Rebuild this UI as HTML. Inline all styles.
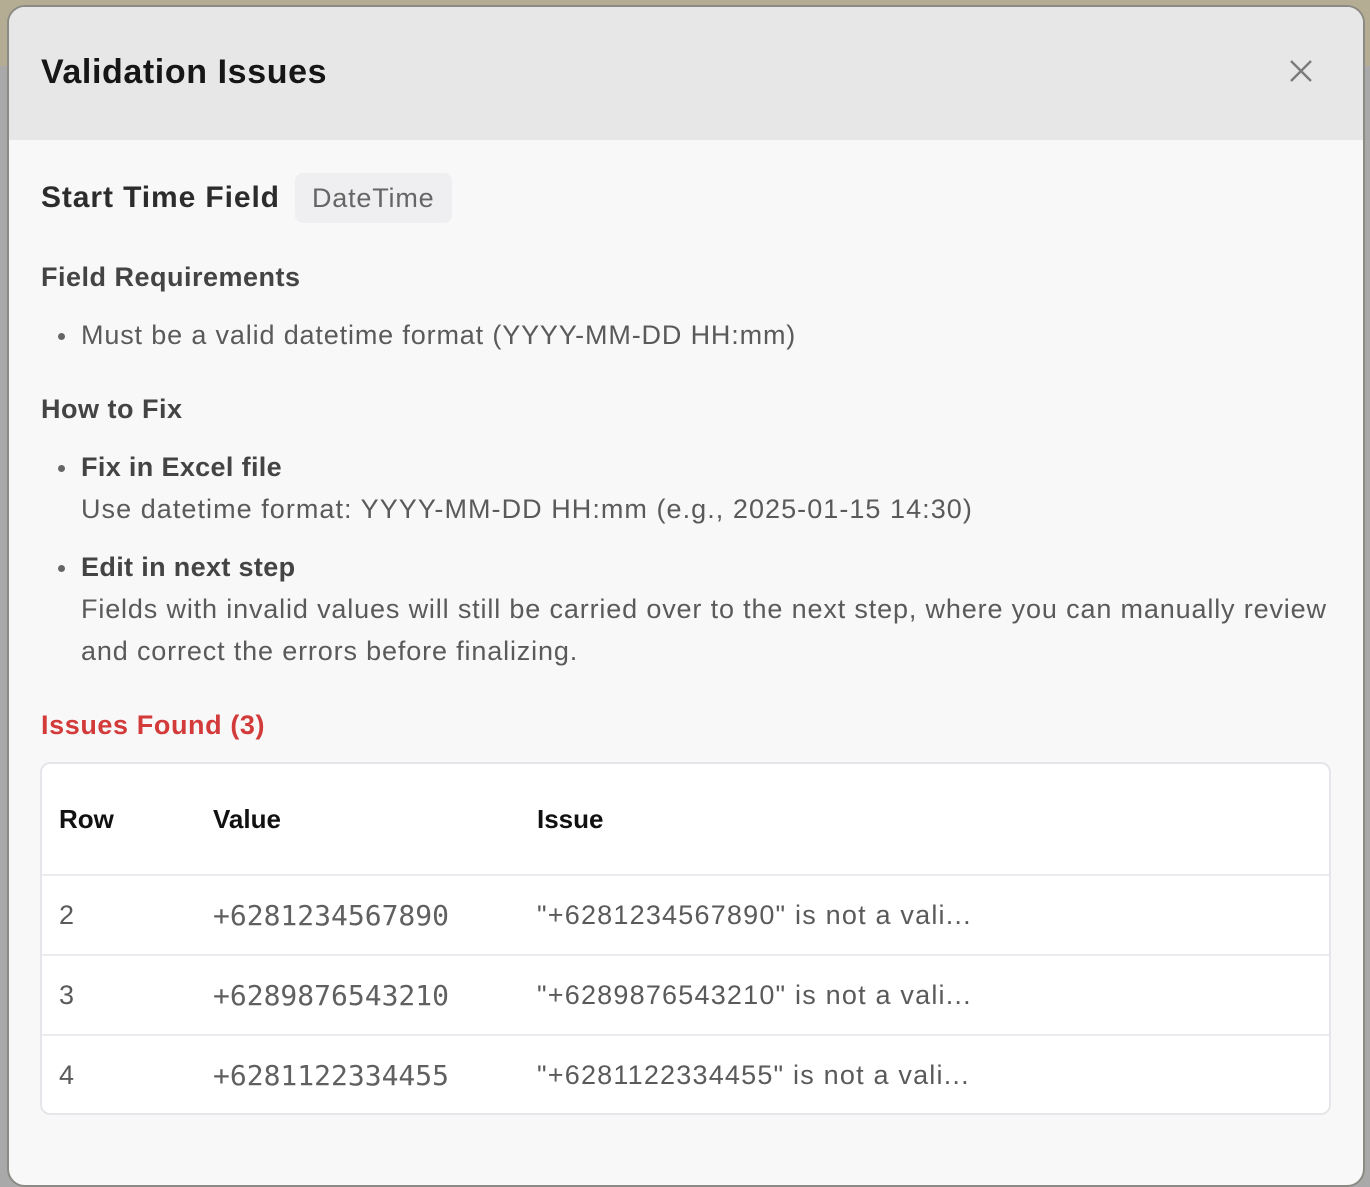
<!DOCTYPE html>
<html><head><meta charset="utf-8"><style>
*{margin:0;padding:0;box-sizing:border-box}
body{width:1370px;height:1182px;overflow:hidden;position:relative;background:#a9a9a9;font-family:"Liberation Sans",sans-serif}
.bgtop{position:absolute;left:0;top:0;width:1370px;height:66px;background:#b5ad93}
.modal{position:absolute;left:7px;top:5px;width:1358px;height:1182px;border:2px solid #8c8a84;border-radius:18px;background:#f8f8f8;overflow:hidden}
.hdr{position:absolute;left:0;top:0;width:100%;height:133px;background:#e7e7e7}
.t{position:absolute;white-space:nowrap}
.h1{font-size:34px;font-weight:bold;color:#161616;letter-spacing:0.6px}
.h2{font-size:30px;font-weight:bold;color:#2c2c2c;letter-spacing:0.9px}
.h3{font-size:27px;font-weight:bold;color:#444;letter-spacing:0.5px}
.p{font-size:27px;color:#5a5a5a;letter-spacing:0.85px}
.b{font-size:27px;font-weight:bold;color:#444;letter-spacing:0.35px}
.dot{position:absolute;width:7px;height:7px;border-radius:50%;background:#666}
.tbl{position:absolute;left:31px;top:755px;width:1291px;height:353px;background:#fff;border:2px solid #e6e6ea;border-radius:10px}
.line{position:absolute;left:0;width:100%;height:2px;background:#ececf0}
.th{font-size:26px;font-weight:bold;color:#111}
.mono{font-family:"DejaVu Sans Mono","Liberation Mono",monospace;font-size:28px;color:#606060}
.iss{font-size:27px;color:#5a5a5a;letter-spacing:1.2px}
</style></head><body>
<div class="bgtop"></div>
<div class="modal">
 <div class="hdr"></div>
 <div class="t h1" style="left:32px;top:46px">Validation Issues</div>
 <svg style="position:absolute;left:1280px;top:52px" width="24" height="24" viewBox="0 0 24 24"><path d="M2 2L22 22M22 2L2 22" stroke="#7b7b7b" stroke-width="2.4"/></svg>
 <div style="position:absolute;left:286px;top:166px;width:157px;height:50px;background:#efeff1;border-radius:8px"></div>
 <div class="t h2" style="left:32px;top:174px">Start Time Field</div>
 <div class="t" style="left:303px;top:176px;font-size:27px;color:#666;letter-spacing:0.8px">DateTime</div>
 <div class="t h3" style="left:32px;top:255px">Field Requirements</div>
 <div class="dot" style="left:49px;top:326px"></div>
 <div class="t p" style="left:72px;top:313px">Must be a valid datetime format (YYYY-MM-DD HH:mm)</div>
 <div class="t h3" style="left:32px;top:387px">How to Fix</div>
 <div class="dot" style="left:49px;top:458px"></div>
 <div class="t b" style="left:72px;top:445px">Fix in Excel file</div>
 <div class="t p" style="left:72px;top:487px;letter-spacing:1.05px">Use datetime format: YYYY-MM-DD HH:mm (e.g., 2025-01-15 14:30)</div>
 <div class="dot" style="left:49px;top:558px"></div>
 <div class="t b" style="left:72px;top:545px">Edit in next step</div>
 <div class="t p" style="left:72px;top:587px">Fields with invalid values will still be carried over to the next step, where you can manually review</div>
 <div class="t p" style="left:72px;top:629px">and correct the errors before finalizing.</div>
 <div class="t" style="left:32px;top:703px;font-size:27px;font-weight:bold;color:#d33a3a;letter-spacing:0.6px">Issues Found (3)</div>
 <div class="tbl">
  <div class="t th" style="left:17px;top:40px">Row</div>
  <div class="t th" style="left:171px;top:40px">Value</div>
  <div class="t th" style="left:495px;top:40px">Issue</div>
  <div class="line" style="top:110px"></div>
  <div class="t p" style="left:17px;top:136px">2</div>
  <div class="t mono" style="left:171px;top:135px">+6281234567890</div>
  <div class="t iss" style="left:495px;top:136px">"+6281234567890" is not a vali...</div>
  <div class="line" style="top:190px"></div>
  <div class="t p" style="left:17px;top:216px">3</div>
  <div class="t mono" style="left:171px;top:215px">+6289876543210</div>
  <div class="t iss" style="left:495px;top:216px">"+6289876543210" is not a vali...</div>
  <div class="line" style="top:270px"></div>
  <div class="t p" style="left:17px;top:296px">4</div>
  <div class="t mono" style="left:171px;top:295px">+6281122334455</div>
  <div class="t iss" style="left:495px;top:296px">"+6281122334455" is not a vali...</div>
 </div>
</div>
</body></html>
